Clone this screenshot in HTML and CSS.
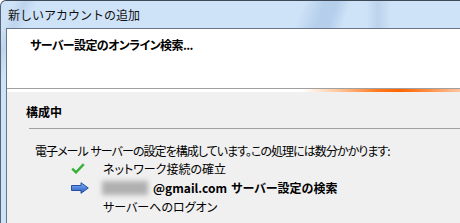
FILE: index.html
```html
<!DOCTYPE html>
<html lang="ja">
<head>
<meta charset="utf-8">
<link rel="stylesheet" href="styles.css">
</head>
<body>
<div class="window">
  <div class="titlebar">新しいアカウントの追加</div>
  <div class="client">
    <div class="header">
      <div class="heading">サーバー設定のオンライン検索...</div>
    </div>
    <div class="progress"></div>
    <div class="main">
      <div class="section-title">構成中</div>
      <div class="rule"></div>
      <div class="desc">電子メール サーバーの設定を構成しています。この処理には数分かかります:</div>
      <div class="steps">
        <div class="icon">
          <svg width="14" height="11" viewBox="0 0 14 11"><path d="M1.2 5.6 L5 9.4 L12.8 1.2" fill="none" stroke="#39b03a" stroke-width="2.4" stroke-linejoin="miter"/></svg>
        </div>
        <div class="step">ネットワーク接続の確立</div>
        <div class="icon">
          <svg width="18" height="12" viewBox="0 0 18 12">
            <defs>
              <linearGradient id="ag" x1="0" y1="0" x2="0" y2="1">
                <stop offset="0" stop-color="#8fb6f0"/>
                <stop offset="0.5" stop-color="#4f84de"/>
                <stop offset="1" stop-color="#2c5bbd"/>
              </linearGradient>
            </defs>
            <path d="M0.5 3.5 H10 V0.7 L17.3 6 L10 11.3 V8.5 H0.5 Z" fill="url(#ag)" stroke="#2a4f9e" stroke-width="1"/>
          </svg>
        </div>
        <div class="step current"><span class="blur"></span><span class="mail">@gmail.com</span> サーバー設定の検索</div>
        <div class="icon"></div>
        <div class="step">サーバーへのログオン</div>
      </div>
    </div>
  </div>
</div>
</body>
</html>
```

FILE: styles.css
```css
html, body {
  margin: 0;
  padding: 0;
}
body {
  width: 460px;
  height: 223px;
  overflow: hidden;
  background: #ffffff;
  font-family: "Noto Sans CJK JP", "Noto Sans", sans-serif;
  font-size: 12px;
  color: #000;
}
.window {
  height: 222px;
  border-top: 1px solid #3f4a58;
  border-left: 1px solid #55657a;
  border-top-left-radius: 6px;
  padding-left: 5px;
  display: flex;
  flex-direction: column;
  background:
    linear-gradient(115deg, rgba(255,255,255,0) 0px, rgba(255,255,255,0) 12px, rgba(170,195,225,0.45) 22px, rgba(255,255,255,0) 34px),
    #cfe3f8;
}
.titlebar {
  height: 27px;
  padding-left: 2px;
  line-height: 27px;
  font-size: 12px;
  color: #101010;
  background:
    linear-gradient(110deg, rgba(255,255,255,0) 280px, rgba(160,190,225,0.55) 300px, rgba(160,190,225,0.55) 312px, rgba(255,255,255,0) 325px),
    linear-gradient(90deg, rgba(255,255,255,0) 360px, rgba(170,195,225,0.5) 372px, rgba(255,255,255,0) 385px);
}
.client {
  flex: 1;
  display: flex;
  flex-direction: column;
  border-top: 1px solid #687587;
  border-left: 1px solid #687587;
  background: #f0f0f0;
}
.header {
  height: 59px;
  background: #ffffff;
  border-bottom: 1px solid #a0a0a0;
  padding-left: 23px;
}
.heading {
  padding-top: 9px;
  line-height: 14px;
  font-weight: bold;
  font-feature-settings: "palt";
  letter-spacing: -0.6px;
}
.progress {
  height: 3px;
  background: linear-gradient(90deg, #ffffff 0px, #ffffff 296px, #ffc9a0 330px, #ff7a20 370px, #ff6400 392px, #ff8a40 420px, #ffc6a0 453px);
}
.main {
  flex: 1;
  padding-left: 19px;
  padding-top: 13px;
}
.section-title {
  line-height: 14px;
  font-weight: bold;
}
.rule {
  margin-top: 9px;
  margin-left: 3px;
  border-top: 1px solid #a0a0a0;
}
.desc {
  margin-top: 15px;
  margin-left: 9px;
  line-height: 14px;
  font-feature-settings: "palt";
  letter-spacing: -0.95px;
  word-spacing: 1px;
  white-space: nowrap;
}
.steps {
  margin-top: 1px;
  margin-left: 45px;
  display: grid;
  grid-template-columns: 32px auto;
  grid-auto-rows: 19px;
  align-items: center;
}
.icon {
  display: flex;
  align-items: center;
}
.icon svg {
  display: block;
}
.step {
  line-height: 19px;
  font-feature-settings: "palt";
  white-space: nowrap;
  display: flex;
  align-items: center;
}
.current {
  font-weight: bold;
}
.blur {
  display: inline-block;
  width: 46px;
  height: 14px;
  background: #b0b0b0;
  filter: blur(2.5px);
  margin-left: -1px;
  margin-right: 5px;
}
.mail {
  margin-right: 4px;
}
```
